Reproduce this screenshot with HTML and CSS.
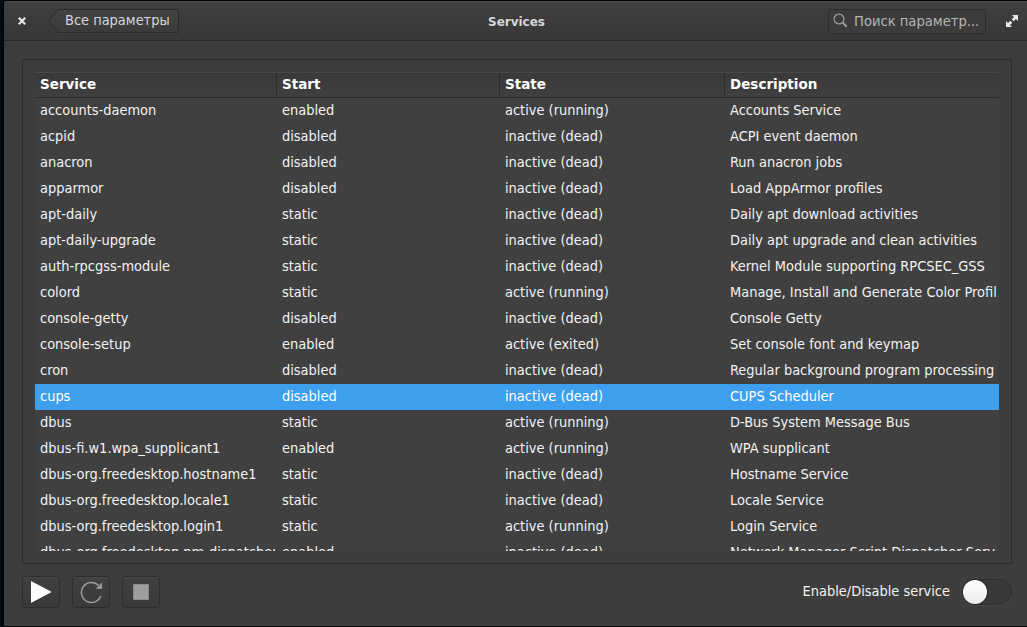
FILE: index.html
```html
<!DOCTYPE html>
<html lang="ru">
<head>
<meta charset="utf-8">
<title>Services</title>
<link rel="stylesheet" href="styles.css">
</head>
<body>
<div class="window">
  <header class="titlebar">
    <svg class="close" width="8" height="8" viewBox="0 0 8 8"><path d="M.8.8l6.400 6.400M7.200.8L.8 7.200" stroke="#e6e6e6" stroke-width="2.200"/></svg>
    <div class="back">
      <svg class="back-shape" width="131" height="25" viewBox="0 0 131 25">
        <defs><linearGradient id="bg" x1="0" y1="0" x2="0" y2="1"><stop offset="0" stop-color="#444"/><stop offset="1" stop-color="#3a3a3a"/></linearGradient></defs>
        <path d="M10.500 1.500H128q1.500 0 1.500 1.500V22.500q0 1.500-1.500 1.500H10.500L.7 12.500z" fill="none" stroke="#474747"/>
        <path d="M10 .5H129q1.500 0 1.500 1.500V22q0 1.500-1.500 1.500H10L.7 12z" fill="url(#bg)" stroke="#2a2a2a"/>
      </svg>
      <span class="back-label">Все параметры</span>
    </div>
    <h1 class="title">Services</h1>
    <div class="search">
      <svg width="16" height="16" viewBox="0 0 16 16" fill="none" stroke="#9a9a9a"><circle cx="6" cy="6" r="4.900" stroke-width="1.200"/><path d="M9.700 9.700l4 4" stroke-width="2"/></svg>
      <span>Поиск параметр...</span>
    </div>
    <svg class="maximize" width="12" height="12" viewBox="0 0 12 12" fill="#e8e8e8"><path d="M6 0h6v6L10 4 7.700 6.300 5.700 4.300 8 2zM6 12H0V6l2 2 2.300-2.300 2 2L4 10z"/></svg>
  </header>
  <main class="content">
    <section class="frame">
      <div class="table">
        <div class="row head"><span>Service</span><span>Start</span><span>State</span><span>Description</span></div>
        <div class="row"><span>accounts-daemon</span><span>enabled</span><span>active (running)</span><span>Accounts Service</span></div>
        <div class="row"><span>acpid</span><span>disabled</span><span>inactive (dead)</span><span>ACPI event daemon</span></div>
        <div class="row"><span>anacron</span><span>disabled</span><span>inactive (dead)</span><span>Run anacron jobs</span></div>
        <div class="row"><span>apparmor</span><span>disabled</span><span>inactive (dead)</span><span>Load AppArmor profiles</span></div>
        <div class="row"><span>apt-daily</span><span>static</span><span>inactive (dead)</span><span>Daily apt download activities</span></div>
        <div class="row"><span>apt-daily-upgrade</span><span>static</span><span>inactive (dead)</span><span>Daily apt upgrade and clean activities</span></div>
        <div class="row"><span>auth-rpcgss-module</span><span>static</span><span>inactive (dead)</span><span>Kernel Module supporting RPCSEC_GSS</span></div>
        <div class="row"><span>colord</span><span>static</span><span>active (running)</span><span>Manage, Install and Generate Color Profiles</span></div>
        <div class="row"><span>console-getty</span><span>disabled</span><span>inactive (dead)</span><span>Console Getty</span></div>
        <div class="row"><span>console-setup</span><span>enabled</span><span>active (exited)</span><span>Set console font and keymap</span></div>
        <div class="row"><span>cron</span><span>disabled</span><span>inactive (dead)</span><span>Regular background program processing</span></div>
        <div class="row selected"><span>cups</span><span>disabled</span><span>inactive (dead)</span><span>CUPS Scheduler</span></div>
        <div class="row"><span>dbus</span><span>static</span><span>active (running)</span><span>D-Bus System Message Bus</span></div>
        <div class="row"><span>dbus-fi.w1.wpa_supplicant1</span><span>enabled</span><span>active (running)</span><span>WPA supplicant</span></div>
        <div class="row"><span>dbus-org.freedesktop.hostname1</span><span>static</span><span>inactive (dead)</span><span>Hostname Service</span></div>
        <div class="row"><span>dbus-org.freedesktop.locale1</span><span>static</span><span>inactive (dead)</span><span>Locale Service</span></div>
        <div class="row"><span>dbus-org.freedesktop.login1</span><span>static</span><span>active (running)</span><span>Login Service</span></div>
        <div class="row"><span>dbus-org.freedesktop.nm-dispatcher</span><span>enabled</span><span>inactive (dead)</span><span>Network Manager Script Dispatcher Service</span></div>
      </div>
    </section>
    <footer class="actions">
      <button class="btn"><svg width="20" height="24" viewBox="0 0 20 24"><path d="M0 2v22l21-11z" fill="#2a2a2a"/><path d="M0 1v22l21-11z" fill="#fcfcfc"/></svg></button>
      <button class="btn"><svg width="24" height="24" viewBox="0 0 24 24"><path d="M19.500 5.500A10 10 0 1 0 21.800 16" fill="none" stroke="#9c9c9c" stroke-width="1.500"/><path d="M23 2.500v6.300h-6.300z" fill="#9c9c9c"/></svg></button>
      <button class="btn"><svg width="16" height="16" viewBox="0 0 16 16"><path d="M.5.5h15v15H.5z" fill="#9e9e9e" stroke="#8c8c8c"/></svg></button>
      <span class="switch-label">Enable/Disable service</span>
      <div class="switch"><div class="knob"></div></div>
    </footer>
  </main>
</div>
</body>
</html>
```
FILE: styles.css
```css
* { box-sizing: border-box; }
body {
  margin: 0;
  height: 627px;
  padding: 1px 0 1px 4px;
  overflow: hidden;
  background: linear-gradient(90deg, #050a17 3px, #000 3px);
  color: #f2f2f2;
  font: 14.45px/24px "DejaVu Sans Condensed", "DejaVu Sans", sans-serif;
}
.window {
  display: flex;
  flex-direction: column;
  height: 625px;
  background: #3d3d3d;
  border-radius: 3px 0 0 0;
  overflow: hidden;
}
.titlebar {
  display: flex;
  align-items: center;
  flex: none;
  height: 40px;
  padding: 0 9px 0 14px;
  background: linear-gradient(#404040, #373737);
  border-top: 1px solid #505050;
  border-bottom: 1px solid #282828;
  color: #d6d6d6;
}
.close { flex: none; }
.back {
  display: grid;
  width: 131px;
  height: 25px;
  margin-left: 22px;
}
.back > * { grid-area: 1 / 1; }
.back-label { padding-left: 17px; line-height: 22px; white-space: nowrap; }
.title {
  flex: 1;
  margin: 0 0 0 26px;
  padding-top: 1px;
  text-align: center;
  font: bold 12px/26px "DejaVu Sans", sans-serif;
}
.search {
  display: flex;
  align-items: center;
  width: 158px;
  height: 25px;
  padding-left: 4px;
  gap: 5px;
  border: 1px solid #2c2c2c;
  border-radius: 3px;
  background: #3c3c3c;
  color: #b5b5b5;
  font-size: 14.6px;
  white-space: nowrap;
}
.maximize { margin-left: 20px; flex: none; }
.content { padding: 18px 15px 0 18px; }
.frame {
  height: 505px;
  padding: 12px;
  border: 1px solid #2c2c2c;
}
.table {
  height: 479px;
  background: #404040;
  overflow: hidden;
}
.row {
  display: grid;
  grid-template-columns: 242px 223px 225px 274px;
  height: 26px;
}
.row span {
  padding-left: 5px;
  margin-right: 2px;
  overflow: hidden;
  white-space: nowrap;
}
.row.head {
  border-top: 1px solid #484848;
  border-bottom: 1px solid #2c2c2c;
  background: linear-gradient(#393939, #404040);
  color: #fff;
  font: bold 13.5px/23px "DejaVu Sans", sans-serif;
}
.row.head span { margin-right: 0; border-right: 1px solid #2c2c2c; }
.row.head span:last-child { border-right: 0; }
.row span:last-child { margin-right: 3px; }
.selected { background: #3d9fee; color: #fff; }
.actions {
  display: flex;
  align-items: center;
  height: 32px;
  margin-top: 12px;
}
.btn {
  display: flex;
  align-items: center;
  justify-content: center;
  width: 38px;
  height: 32px;
  margin-right: 12px;
  padding: 0;
  border: 1px solid #2d2d2d;
  border-radius: 3px;
  background: linear-gradient(#404040, #393939);
  box-shadow: inset 0 1px #484848;
}
.switch-label { margin-left: auto; padding-bottom: 2px; }
.switch {
  width: 50px;
  height: 26px;
  margin-left: 12px;
  border: 1px solid #2e2e2e;
  border-radius: 13px;
  background: #393939;
  box-shadow: 0 1px #484848;
}
.knob {
  width: 24px;
  height: 24px;
  border-radius: 50%;
  background: linear-gradient(#fff, #ececec);
  box-shadow: 0 0 1px 1px #2a2a2a;
}
```
